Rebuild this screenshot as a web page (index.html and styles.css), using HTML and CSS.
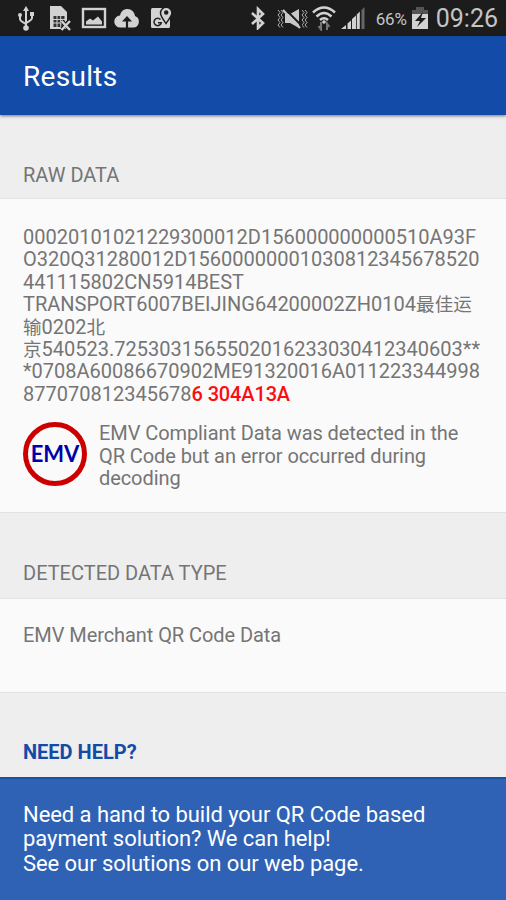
FILE: index.html
```html
<!DOCTYPE html>
<html lang="en">
<head>
    <meta charset="UTF-8">
    <meta name="viewport" content="width=device-width, initial-scale=1.0">
    <title>Results</title>
    <link rel="stylesheet" href="styles.css">
</head>
<body>

    <div class="status-bar">
        <div class="status-left">
            <!-- usb -->
            <svg width="18" height="26" viewBox="0 0 18 26">
                <path d="M9 3v18M3 10v4q0 2 6 5M15 9v4q0 2-6 5" fill="none" stroke="#d2d2d2" stroke-width="2"/>
                <path d="M9 1l3 5H6z" fill="#d2d2d2"/>
                <circle cx="9" cy="23" r="2.800" fill="#d2d2d2"/>
                <circle cx="3" cy="10" r="2" fill="#d2d2d2"/>
                <rect x="13" y="7" width="4" height="4" fill="#d2d2d2"/>
            </svg>
            <!-- sim card -->
            <svg width="22" height="26" viewBox="0 0 22 26">
                <path d="M1 1h11l6 6v17H1z" fill="#d2d2d2"/>
                <path d="M4.500 11h11v11h-11z" fill="#333"/>
                <path d="M8 11v11M11.700 11v11M4 14.500h12M4 18h12" stroke="#d2d2d2" stroke-width="1"/>
                <path d="M13 16l7 8M20 16l-7 8" stroke="#1c1c1c" stroke-width="4"/>
                <path d="M12.500 16l8.500 9M21 16l-8.500 9" stroke="#d2d2d2" stroke-width="2.400"/>
            </svg>
            <!-- picture -->
            <svg width="26" height="26" viewBox="0 0 26 26">
                <rect x="2" y="4" width="22" height="18" fill="none" stroke="#d2d2d2" stroke-width="2.400"/>
                <path d="M5 19.500v-3l4-3 3 2 5-4 4 5v3z" fill="#d2d2d2"/>
            </svg>
            <!-- cloud upload -->
            <svg width="26" height="26" viewBox="0 0 26 26">
                <path d="M6.500 22.500a6 6 0 0 1-.5-12C7 6 10 4 13.500 4c4 0 7 3 7.500 7a6 6 0 0 1-1 11.500z" fill="#d2d2d2"/>
                <path d="M13 14V24" stroke="#1c1c1c" stroke-width="2.200"/>
                <path d="M13 11l5 5.500H8z" fill="#1c1c1c"/>
            </svg>
            <!-- maps -->
            <svg width="22" height="26" viewBox="0 0 22 26">
                <rect x="1" y="3" width="19" height="20" rx="1.500" fill="#d2d2d2"/>
                <path d="M16 18.500c-3.500-5-5.500-7.500-5.500-10.500a5.700 5.700 0 0 1 11.400 0c0 3-2.400 5.500-5.900 10.500z" fill="#d2d2d2" stroke="#1c1c1c" stroke-width="1.500"/>
                <circle cx="16.200" cy="7.500" r="2.200" fill="#1c1c1c"/>
                <path d="M10.500 14.500a3.700 3.700 0 1 0 .8 3.300H8" fill="none" stroke="#222" stroke-width="1.500"/>
            </svg>
        </div>
        <div class="status-right">
            <!-- bluetooth -->
            <svg class="bluetooth" width="16" height="24" viewBox="0 0 16 24">
                <path d="M2 7l11 10-5 5V3l5 5-11 10" fill="none" stroke="#d2d2d2" stroke-width="2.600"/>
            </svg>
            <!-- vibrate, sound off -->
            <svg class="vibrate" width="32" height="24" viewBox="0 0 32 24">
                <path d="M2 3l2 2.500L2 8l2 2.500L2 13l2 2.500L2 18l2 2.500M5 3l2 2.500L5 8l2 2.500L5 13l2 2.500L5 18l2 2.500M26 3l2 2.500L26 8l2 2.500-2 2.500 2 2.500L26 18l2 2.500M29 3l2 2.500L29 8l2 2.500-2 2.500 2 2.500L29 18l2 2.500" fill="none" stroke="#b0b0b0" stroke-width="1"/>
                <path d="M9 7h5l9-5v19l-9-5H9z" fill="#c8c8c8"/>
                <path d="M9 2l17 17" stroke="#1c1c1c" stroke-width="2"/>
                <path d="M7 3l17 18" stroke="#c8c8c8" stroke-width="2.200"/>
            </svg>
            <!-- wifi -->
            <svg class="wifi" width="24" height="26" viewBox="0 0 24 26">
                <path d="M1 7.500q11-10 22 0M4.500 11.500q7.500-7 15 0M8 15q4-3.500 8 0" fill="none" stroke="#d2d2d2" stroke-width="2.500"/>
                <circle cx="12" cy="17" r="1.800" fill="#d2d2d2"/>
                <path d="M9 17v7M6.500 21l2.500 3.500v-3M15 25v-6M17.500 22l-2.500-3.500v3" fill="none" stroke="#777" stroke-width="2"/>
            </svg>
            <!-- signal -->
            <svg class="signal" width="24" height="24" viewBox="0 0 24 24">
                <path d="M0 23l5-4v4z" fill="#d2d2d2"/>
                <path d="M6.500 17.500l3.500-3V23H6.500z" fill="#d2d2d2"/>
                <path d="M11 13l4-3.500V23h-4z" fill="#d2d2d2"/>
                <path d="M15.800 8.500l3-3V23h-3z" fill="#d2d2d2"/>
                <path d="M20.500 4l3-3v22h-3z" fill="#666"/>
            </svg>
            <span class="percent">66%</span>
            <!-- battery -->
            <svg class="battery" width="18" height="24" viewBox="0 0 18 24">
                <path d="M5 1h8v3h4v8H1V4h4z" fill="#555"/>
                <rect x="1" y="8" width="16" height="15" fill="#d2d2d2"/>
                <path d="M12 6l-8 9h5l-3 6 9-9h-5z" fill="#1c1c1c"/>
            </svg>
            <span class="clock">09:26</span>
        </div>
    </div>

    <header class="app-bar">
        <h1>Results</h1>
    </header>

    <h2 class="section-title raw-title"><span>RAW DATA</span></h2>
    <div class="card raw-card">
        <p class="raw-data">00020101021229300012D156000000000510A93F<br>
            O320Q31280012D15600000001030812345678520<br>
            441115802CN5914BEST<br>
            TRANSPORT6007BEIJING64200002ZH0104<span class="cjk">最佳运</span><br>
            <span class="cjk">输</span>0202<span class="cjk">北</span><br>
            <span class="cjk">京</span>540523.7253031565502016233030412340603**<br>
            *0708A60086670902ME91320016A011223344998<br>
            877070812345678<span class="error">6 304A13A</span></p>
        <div class="emv-row">
            <div class="emv-logo"><span>EMV</span></div>
            <p class="emv-text">EMV Compliant Data was detected in the<br>QR Code but an error occurred during<br>decoding</p>
        </div>
    </div>

    <h2 class="section-title"><span>DETECTED DATA TYPE</span></h2>
    <div class="card type-card">
        <p class="type-text">EMV Merchant QR Code Data</p>
    </div>

    <h2 class="section-title help-title"><span>NEED HELP?</span></h2>
    <div class="help-box">
        <p>Need a hand to build your QR Code based<br>payment solution? We can help!<br>See our solutions on our web page.</p>
    </div>

</body>
</html>
```
FILE: styles.css
```css
* {
    box-sizing: border-box;
}

body {
    font-family: Roboto, "Noto Sans CJK SC", sans-serif;
    margin: 0;
    height: 900px;
    display: flex;
    flex-direction: column;
    background-color: #eeeeee;
    color: #757575;
    font-size: 20px;
    line-height: 22.4px;
    white-space: nowrap;
    overflow: hidden;
}

h1, h2, p {
    margin: 0;
    font-weight: normal;
}

.status-bar {
    display: flex;
    justify-content: space-between;
    height: 36px;
    padding: 5px 8px 0 17px;
    background-color: #1c1c1c;
    color: #c4c4c4;
}

.status-left {
    display: flex;
    gap: 10px;
}

.status-left svg:first-child {
    margin-right: 4px;
}

.status-left svg:nth-child(3) {
    margin-right: -3px;
}

.status-right {
    display: flex;
    align-items: flex-start;
}

.bluetooth {
    margin: 1px 10px 0 0;
}

.vibrate {
    margin: 2px 4px 0 0;
}

.wifi {
    margin: 0 5px 0 0;
}

.signal {
    margin: 1px 11px 0 0;
}

.percent {
    font-size: 17px;
    letter-spacing: -0.2px;
    margin: 3px 4px 0 0;
}

.battery {
    margin: 1px 7px 0 0;
}

.clock {
    font-size: 25px;
    line-height: 27px;
}

.app-bar {
    height: 79px;
    padding: 25px 23px 0;
    background-color: #134ba8;
    color: #fff;
    box-shadow: 0 1px 3px rgba(0, 0, 0, 0.5);
}

.app-bar h1 {
    font-size: 28px;
    line-height: 32px;
    letter-spacing: 0.3px;
}

.section-title {
    display: flex;
    align-items: flex-end;
    height: 85px;
    padding: 0 23px 14px;
    font-size: 20px;
}

.raw-title {
    height: 83px;
    padding-bottom: 12px;
}

.card {
    background-color: #fafafa;
    border-top: 1px solid #e2e2e2;
    border-bottom: 1px solid #e2e2e2;
}

.raw-card {
    height: 315px;
    padding: 27px 23px 0;
}

.cjk {
    font-size: 18.6px;
    line-height: 1;
}

.error {
    color: #fb0d12;
    font-weight: 500;
    letter-spacing: -0.15px;
}

.emv-row {
    display: flex;
    gap: 12px;
    margin-top: 17px;
}

.emv-logo {
    display: flex;
    align-items: center;
    justify-content: center;
    width: 64px;
    height: 64px;
    border: 5px solid #cc0000;
    border-radius: 50%;
    color: #0000a8;
    font-family: Lato, sans-serif;
    font-weight: bold;
    font-size: 22px;
}

.emv-text {
    letter-spacing: -0.08px;
}

.type-card {
    height: 95px;
    padding: 25px 23px 0;
}

.type-text {
    letter-spacing: -0.07px;
}

.help-title {
    height: 84px;
    color: #134ba8;
    font-weight: bold;
}

.help-box {
    flex: 1;
    padding: 24px 23px 0;
    border-top: 2px solid #1653a5;
    background-color: #2f62b5;
    color: #fff;
    font-size: 22px;
    line-height: 24.4px;
    letter-spacing: -0.06px;
}
```
